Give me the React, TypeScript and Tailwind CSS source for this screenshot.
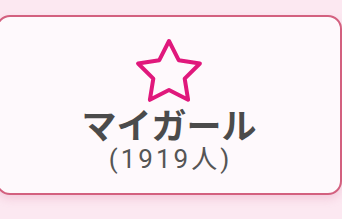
import React from "react";

function Star() {
  const cx = 35, cy = 36.5, R = 32.5, r = 16.5;
  const pts: string[] = [];
  for (let i = 0; i < 10; i++) {
    const rad = i % 2 === 0 ? R : r;
    const a = (-90 + i * 36) * Math.PI / 180;
    pts.push(`${(cx + rad * Math.cos(a)).toFixed(2)},${(cy + rad * Math.sin(a)).toFixed(2)}`);
  }
  return (
    <svg width="70" height="68" viewBox="0 0 70 68" className="block">
      <polygon points={pts.join(" ")} fill="none" stroke="#e0187c" strokeWidth="4" strokeLinejoin="round" />
    </svg>
  );
}

export default function App() {
  return (
    <div className="w-[342px] h-[219px] overflow-hidden bg-[#fce8f1] pt-[15px]">
      <div className="ml-[-4px] w-[346px] h-[180px] rounded-[14px] border-2 border-[#d3607f] bg-[#fef9fc] shadow-[0_4px_8px_rgba(220,120,160,0.25)] flex flex-col items-center pt-[20px]">
        <Star />
        <div className="mt-[3px] text-[35px] leading-[32px] font-bold text-[#4b4b4b]" style={{ fontFamily: '"Noto Sans CJK JP", sans-serif' }}>
          マイガール
        </div>
        <div className="mt-[4px] text-[26px] leading-[30px] text-[#555555] tracking-[3px] pl-[3px]" style={{ fontFamily: 'Roboto, "Noto Sans CJK JP", sans-serif' }}>
          (1919人)
        </div>
      </div>
    </div>
  );
}
